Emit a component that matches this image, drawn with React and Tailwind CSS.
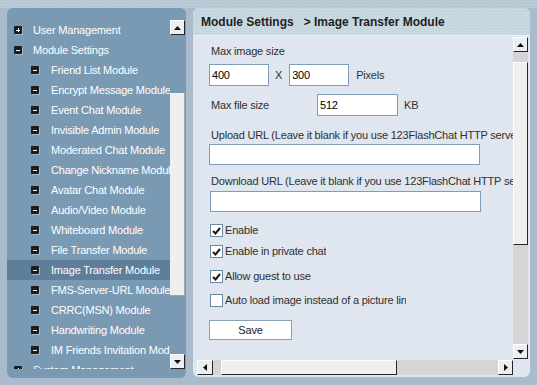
import React from 'react';

const menu = [
  { label: 'User Management', level: 0, plus: true },
  { label: 'Module Settings', level: 0 },
  { label: 'Friend List Module', level: 1 },
  { label: 'Encrypt Message Module', level: 1 },
  { label: 'Event Chat Module', level: 1 },
  { label: 'Invisible Admin Module', level: 1 },
  { label: 'Moderated Chat Module', level: 1 },
  { label: 'Change Nickname Module', level: 1 },
  { label: 'Avatar Chat Module', level: 1 },
  { label: 'Audio/Video Module', level: 1 },
  { label: 'Whiteboard Module', level: 1 },
  { label: 'File Transfer Module', level: 1 },
  { label: 'Image Transfer Module', level: 1, active: true },
  { label: 'FMS-Server-URL Module', level: 1 },
  { label: 'CRRC(MSN) Module', level: 1 },
  { label: 'Handwriting Module', level: 1 },
  { label: 'IM Friends Invitation Module', level: 1 },
  { label: 'System Management', level: 0, plus: true },
];

function TreeBox({ plus }) {
  return (
    <span className="relative flex h-[8px] w-[8px] shrink-0 items-center justify-center rounded-[1px] bg-[#1d1d1d] shadow-[1px_1px_0_#a7b7c4]">
      <span className="h-[1px] w-[4px] bg-white" />
      {plus && <span className="absolute h-[4px] w-[1px] bg-white" />}
    </span>
  );
}

// little arrow button, classic flash scrollbar look
function ArrowBtn({ dir, className = '' }) {
  const pts = {
    up: '0,4 3.5,0 7,4',
    down: '0,0 3.5,4 7,0',
    left: '4,0 0,3.5 4,7',
    right: '0,0 4,3.5 0,7',
  }[dir];
  const vertical = dir === 'up' || dir === 'down';
  return (
    <div
      className={`flex h-[15px] shrink-0 items-center justify-center border border-t-white border-l-white border-r-[#262626] border-b-[#262626] bg-[#eceff2] ${className}`}
    >
      <svg width={vertical ? 7 : 4} height={vertical ? 4 : 7}>
        <polygon points={pts} fill="#111" />
      </svg>
    </div>
  );
}

function Check({ checked, label, className = '' }) {
  return (
    <div className={`flex items-center ${className}`}>
      <span className="flex h-[13px] w-[13px] shrink-0 items-center justify-center border border-[#6f8aa3] bg-white">
        {checked && (
          <svg width="9" height="8" viewBox="0 0 9 8">
            <path d="M1 4 L3.5 6.5 L8 1" stroke="#1a1a1a" strokeWidth="2" fill="none" />
          </svg>
        )}
      </span>
      <span className="ml-[2px] overflow-hidden whitespace-nowrap leading-[13px]">{label}</span>
    </div>
  );
}

export default function App() {
  return (
    <div
      className="h-[385px] w-[537px] overflow-hidden bg-[#a9bbcc] text-[11px] tracking-[-0.2px]"
      style={{ fontFamily: '"Liberation Sans", Arial, sans-serif' }}
    >
      <div className="h-[8px] bg-[#b7c7d3] bg-[radial-gradient(#c6d4de_1px,transparent_1px)] bg-[length:3px_3px]" />
      <div className="flex">
        {/* left tree panel */}
        <div className="ml-[7px] flex h-[370px] w-[179px] rounded-[6px] bg-[#7a99b3] pb-[9px] pt-[12px] pr-[1px]">
          <div className="flex-1 overflow-hidden">
            {menu.map((item) => (
              <div
                key={item.label}
                className={`flex h-[20px] items-center whitespace-nowrap text-white ${
                  item.level ? 'pl-[24px]' : 'pl-[7px]'
                } ${item.active ? 'bg-[#5e7e99]' : ''}`}
              >
                <TreeBox plus={item.plus} />
                <span className={item.level ? 'ml-[12px]' : 'ml-[11px]'}>{item.label}</span>
              </div>
            ))}
          </div>
          <div className="flex w-[15px] flex-col">
            <ArrowBtn dir="up" />
            <div className="flex-1">
              <div className="mt-[58px] h-[203px] border-r border-b border-[#9aa6b0] bg-[#efefef]" />
            </div>
            <ArrowBtn dir="down" />
          </div>
        </div>

        {/* right settings panel */}
        <div className="ml-[7px] flex h-[369px] w-[337px] flex-col overflow-hidden rounded-[6px] bg-[#dfe6ef]">
          <div className="flex h-[28px] items-center border-b border-[#eef2f6] bg-[#c6d6df] bg-[radial-gradient(#d3e0e7_1px,transparent_1px)] bg-[length:3px_3px] pl-[8px] text-[12px] font-bold tracking-normal text-[#1f1f1f]">
            Module Settings&nbsp;&nbsp;&nbsp;&gt; Image Transfer Module
          </div>
          <div className="flex flex-1 flex-col pl-[4px] pr-[2px] pt-[1px] pb-[1px]">
            <div className="flex h-[322px]">
              <div className="flex-1 overflow-hidden pl-[12px] text-[#303030]">
                <div className="ml-[2px] mt-[7px] whitespace-nowrap leading-[14px]">Max image size</div>
                <div className="mt-[6px] flex h-[22px] items-center">
                  <div className="flex h-[22px] w-[60px] items-center border border-[#7f9db9] bg-white pl-[2px] text-black">400</div>
                  <span className="ml-[6px]">X</span>
                  <div className="ml-[7px] flex h-[22px] w-[60px] items-center border border-[#7f9db9] bg-white pl-[2px] text-black">300</div>
                  <span className="ml-[7px]">Pixels</span>
                </div>
                <div className="mt-[8px] flex h-[22px] items-center">
                  <span className="ml-[2px] w-[106px]">Max file size</span>
                  <div className="flex h-[22px] w-[81px] items-center border border-[#7f9db9] bg-white pl-[2px] text-black">512</div>
                  <span className="ml-[6px]">KB</span>
                </div>
                <div className="ml-[2px] mt-[12px] whitespace-nowrap leading-[14px]">
                  Upload URL (Leave it blank if you use 123FlashChat HTTP server)
                </div>
                <div className="mt-[2px] h-[21px] w-[271px] border border-[#7f9db9] bg-white" />
                <div className="ml-[2px] mt-[9px] whitespace-nowrap leading-[14px]">
                  Download URL (Leave it blank if you use 123FlashChat HTTP server)
                </div>
                <div className="ml-[1px] mt-[3px] h-[21px] w-[271px] border border-[#7f9db9] bg-white" />
                <Check checked label="Enable" className="ml-[1px] mt-[12px]" />
                <Check checked label="Enable in private chat" className="ml-[1px] mt-[8px]" />
                <Check checked label="Allow guest to use" className="ml-[1px] mt-[12px]" />
                <Check label="Auto load image instead of a picture link" className="ml-[1px] mt-[11px] w-[196px]" />
                <button className="mt-[13px] flex h-[20px] w-[83px] items-center justify-center border border-[#8aa3b8] bg-white text-[#222]">
                  Save
                </button>
              </div>
              <div className="flex w-[15px] flex-col">
                <ArrowBtn dir="up" />
                <div className="flex-1 bg-[#d5d5d5]">
                  <div className="mt-[10px] h-[183px] border border-t-white border-l-white border-r-[#262626] border-b-[#262626] bg-[#efefef]" />
                </div>
                <ArrowBtn dir="down" />
              </div>
            </div>
            <div className="mt-[1px] flex h-[15px]">
              <div className="flex w-[316px] bg-[#d5d5d5]">
                <ArrowBtn dir="left" className="w-[16px]" />
                <div className="flex-1">
                  <div className="ml-[8px] h-[15px] w-[176px] border border-t-white border-l-white border-r-[#262626] border-b-[#262626] bg-[#efefef]" />
                </div>
                <ArrowBtn dir="right" className="w-[15px]" />
              </div>
            </div>
          </div>
        </div>
      </div>
    </div>
  );
}
